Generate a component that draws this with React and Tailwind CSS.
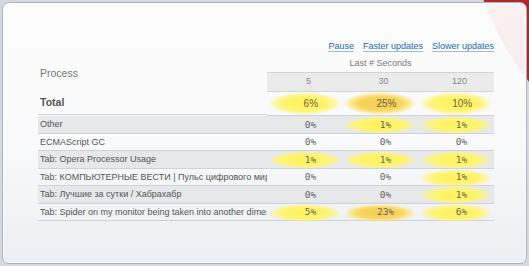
import React from 'react';

const rows = [
  { name: 'Other', vals: ['0%', '1%', '1%'], hot: [0, 1, 1], shade: true },
  { name: 'ECMAScript GC', vals: ['0%', '0%', '0%'], hot: [0, 0, 0] },
  { name: 'Tab: Opera Processor Usage', vals: ['1%', '1%', '1%'], hot: [1, 1, 1], shade: true },
  { name: 'Tab: КОМПЬЮТЕРНЫЕ ВЕСТИ | Пульс цифрового мира', vals: ['0%', '0%', '1%'], hot: [0, 0, 1] },
  { name: 'Tab: Лучшие за сутки / Хабрахабр', vals: ['0%', '0%', '1%'], hot: [0, 0, 1], shade: true },
  { name: 'Tab: Spider on my monitor being taken into another dimension', vals: ['5%', '23%', '6%'], hot: [1, 2, 1] },
];

const yellow = 'bg-[radial-gradient(ellipse_at_center,#fff25c_0%,#fff46e_42%,rgba(255,245,120,0.7)_56%,rgba(255,255,255,0)_70%)]';
const orange = 'bg-[radial-gradient(ellipse_at_center,#f6cc52_0%,#f8d660_42%,rgba(252,226,108,0.7)_56%,rgba(255,255,255,0)_70%)]';

function Value({ v, hot, total }) {
  const glow = hot === 2 ? orange : hot === 1 ? yellow : '';
  return (
    <div className="flex items-center justify-center">
      <span
        className={`flex items-center justify-center w-[74px] ${total ? 'h-[23px]' : 'h-[18px]'} pl-[12px] ${glow}`}
      >
        {v}
      </span>
    </div>
  );
}

export default function App() {
  return (
    <div className="relative w-[529px] h-[266px] overflow-hidden bg-[#d3d9df] font-['Liberation_Sans',Arial,sans-serif]">
      <div className="absolute left-[466px] top-[-394px] w-[588px] h-[588px] rounded-full bg-[radial-gradient(circle_at_50%_50%,#9e1f22_0%,#b52a2c_88%,#d24a4a_97%,#e88a88_100%)]" />
      <div className="relative m-[2px] h-[262px] rounded-[7px] border border-[#aab4bf] shadow-[inset_0_0_0_1px_rgba(255,255,255,0.9)] bg-[linear-gradient(to_bottom,rgba(255,255,255,0.93)_0%,rgba(252,252,253,0.93)_55%,rgba(236,239,243,0.96)_100%)] pt-[36px] pl-[35px]">
        <div className="flex justify-end gap-[9px] w-[456px] h-[16px] items-center text-[9px] text-[#2868b0]">
          <span className="underline decoration-[#9dbbe0] underline-offset-2">Pause</span>
          <span className="underline decoration-[#9dbbe0] underline-offset-2">Faster updates</span>
          <span className="underline decoration-[#9dbbe0] underline-offset-2">Slower updates</span>
        </div>
        <div className="grid grid-cols-[229px_75px_75px_77px] w-[456px]">
          <div className="row-span-2 flex items-center pl-[2px] text-[10.5px] text-[#777]">Process</div>
          <div className="col-span-3 h-[17px] flex items-center justify-center text-[9px] text-[#7a7a7a]">
            Last # Seconds
          </div>
          {['5', '30', '120'].map((h) => (
            <div
              key={h}
              className="h-[20px] flex items-center justify-center pl-[8px] bg-[#ebebeb] border-t border-b border-[#d2d5d8] text-[9px] text-[#888]"
            >
              {h}
            </div>
          ))}

          <div className="h-[23px] flex items-center pl-[2px] border-b border-[#cfd3d7] text-[10.5px] font-bold text-[#555]">
            Total
          </div>
          <div className="col-span-3 grid grid-cols-3 border-b border-[#cfd3d7] text-[10px] text-[#6e6440]">
            <Value v="6%" hot={1} total />
            <Value v="25%" hot={2} total />
            <Value v="10%" hot={1} total />
          </div>

          {rows.map((r) => (
            <div
              key={r.name}
              className={`col-span-4 grid grid-cols-[229px_75px_75px_77px] h-[17.5px] border-b border-[#cfd3d7] ${r.shade ? 'bg-[#e7e8ea]' : ''}`}
            >
              <div className="flex items-center pl-[2px] overflow-hidden whitespace-nowrap text-[9px] text-[#555]">
                {r.name}
              </div>
              {r.vals.map((v, i) => (
                <div key={i} className="font-['DejaVu_Sans_Mono',monospace] text-[9.5px] text-[#666]">
                  <Value v={v} hot={r.hot[i]} />
                </div>
              ))}
            </div>
          ))}
        </div>
      </div>
    </div>
  );
}
